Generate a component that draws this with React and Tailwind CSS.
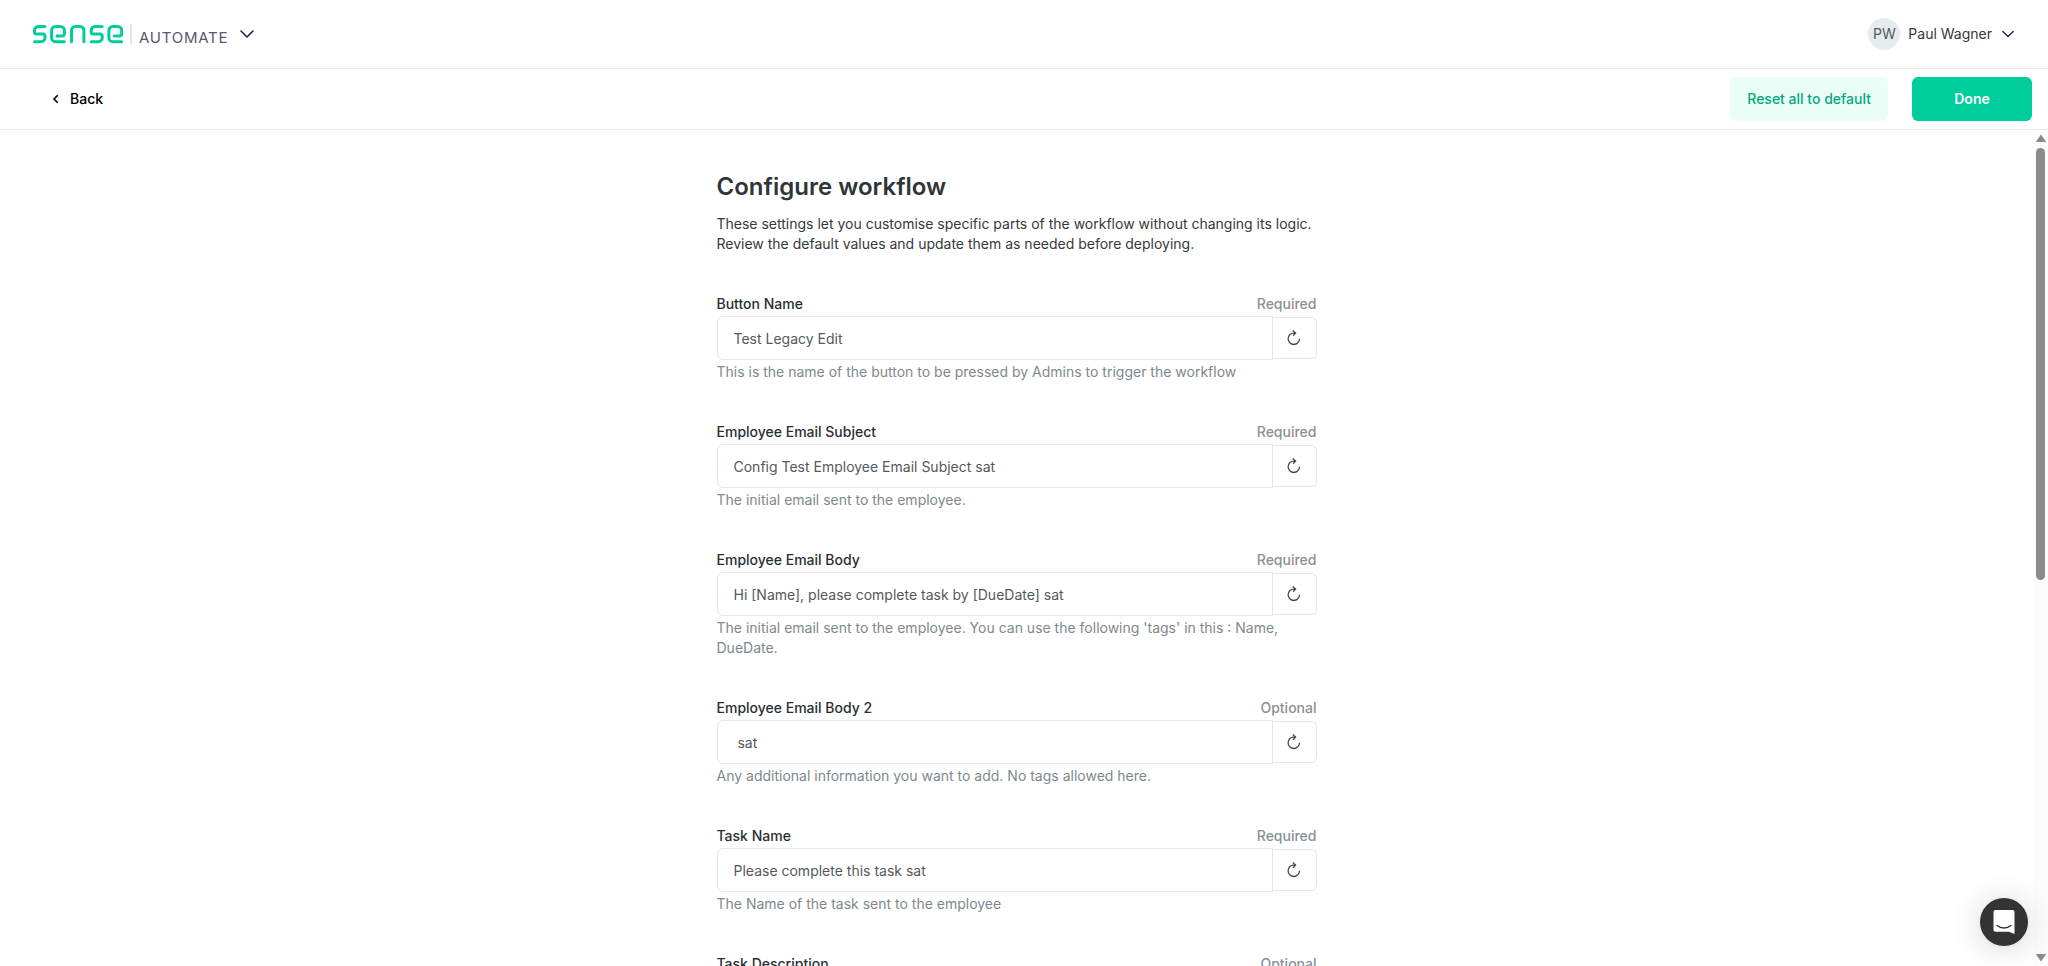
import React from "react";

const FIELDS = [
  { id: "button-name", label: "Button Name", need: "Required", value: "Test Legacy Edit", help: "This is the name of the button to be pressed by Admins to trigger the workflow" },
  { id: "email-subject", label: "Employee Email Subject", need: "Required", value: "Config Test Employee Email Subject sat", help: "The initial email sent to the employee." },
  { id: "email-body", label: "Employee Email Body", need: "Required", value: "Hi [Name], please complete task by [DueDate] sat", help: "The initial email sent to the employee. You can use the following 'tags' in this : Name, DueDate." },
  { id: "email-body-2", label: "Employee Email Body 2", need: "Optional", value: " sat", help: "Any additional information you want to add. No tags allowed here." },
  { id: "task-name", label: "Task Name", need: "Required", value: "Please complete this task sat", help: "The Name of the task sent to the employee" },
  { id: "task-description", label: "Task Description", need: "Optional", value: "", help: "" },
];

function SenseLogo() {
  return (
    <svg role="img" aria-label="sense" width="92" height="20" viewBox="0 0 92 20" fill="none" stroke="#00cd9c" strokeWidth="3" strokeLinecap="round" strokeLinejoin="round">
      <path d="M12.8 2.500H6.500a4 4 0 0 0-4 4v1.500a2 2 0 0 0 2 2h6.500a2 2 0 0 1 2 2v1.700a4 4 0 0 1-4 4H2.500" />
      <path d="M25 12h5a2.400 2.400 0 0 0 2.400-2.400V6.500a4 4 0 0 0-4-4h-4.800a4 4 0 0 0-4 4v7.200a4 4 0 0 0 4 4h8.700" />
      <path d="M39.500 17.700V6.500a4 4 0 0 1 4-4h4.400a4 4 0 0 1 4 4v11.200" />
      <path d="M70.100 2.500h-6.900a4 4 0 0 0-4 4v1.500a2 2 0 0 0 2 2h7a2 2 0 0 1 2 2v1.700a4 4 0 0 1-4 4h-7" />
      <path d="M82.300 12h5a2.400 2.400 0 0 0 2.400-2.400V6.500a4 4 0 0 0-4-4h-4.800a4 4 0 0 0-4 4v7.200a4 4 0 0 0 4 4h8.700" />
    </svg>
  );
}

function Chevron({ className }) {
  return (
    <svg className={className} viewBox="0 0 14 8" fill="none" stroke="currentColor" strokeWidth="1.600" strokeLinecap="round" strokeLinejoin="round" aria-hidden="true">
      <path d="M1 1l6 6 6-6" />
    </svg>
  );
}

function Field({ id, label, need, value, help }) {
  return (
    <div className="flex flex-col gap-0.5">
      <div className="flex justify-between">
        <label htmlFor={id} className="font-medium text-[#272f34]">{label}</label>
        <span className="font-medium text-[#889296]">{need}</span>
      </div>
      <div className="flex items-center">
        <input id={id} type="text" defaultValue={value} className="h-11 min-w-0 flex-1 rounded-l-md border border-[#e5e7e8] bg-white px-4 text-[#54595c] outline-none" />
        <button type="button" aria-label={`Reset ${label}`} className="flex h-[42px] w-11 items-center justify-center rounded-r-md border border-l-0 border-[#e5e7e8] text-[#464b4e]">
          <svg width="16" height="16" viewBox="0 0 16 16" fill="none" stroke="currentColor" strokeWidth="1.300" aria-hidden="true">
            <path d="M9.500 3.100H7.800a5.700 5.700 0 1 0 5.700 5.700M6.800.600l2.800 2.500-2.500 2.600" />
          </svg>
        </button>
      </div>
      <p className="text-[#7e898d]">{help}</p>
    </div>
  );
}

export default function App() {
  return (
    <div className="flex h-screen flex-col bg-white font-['Inter',sans-serif] text-sm leading-5">
      <header className="flex h-[69px] shrink-0 items-center justify-between border-b border-[#e4eef0] pr-[34px] pl-8">
        <button type="button" className="flex items-center text-[#5d5670]">
          <SenseLogo />
          <span className="ml-1.5 h-5 w-0.5 bg-[#e4e3ea]" />
          <span className="ml-[7px] pt-2 text-[15px] tracking-wider">AUTOMATE</span>
          <Chevron className="ml-3 h-2 w-3.5 text-[#2a2350]" />
        </button>
        <button type="button" className="flex items-center gap-2 text-[#34373a]">
          <span className="flex size-8 items-center justify-center rounded-full bg-[#e4ecee] text-[#54595c]">PW</span>
          <span>Paul Wagner</span>
          <Chevron className="ml-0.5 h-2 w-3 text-[#2a2350]" />
        </button>
      </header>

      <div className="flex h-[61px] shrink-0 items-center justify-between border-b border-[#e8ebec] pr-4 pl-[52px]">
        <button type="button" className="flex items-center gap-[11px] font-medium text-black">
          <svg width="7" height="10" viewBox="0 0 7 10" fill="none" stroke="currentColor" strokeWidth="1.600" aria-hidden="true">
            <path d="M5.700 1.200L2 5l3.700 3.800" />
          </svg>
          Back
        </button>
        <div className="flex gap-6">
          <button type="button" className="h-11 rounded-md bg-[#eafef7] px-[17px] font-medium text-[#06a77f]">Reset all to default</button>
          <button type="button" className="h-11 w-[120px] rounded-md bg-[#00cd9c] font-semibold text-white">Done</button>
        </div>
      </div>

      <div className="flex min-h-0 flex-1">
        <main className="flex-1 overflow-y-auto [scrollbar-width:none]">
          <form className="mx-auto flex max-w-[600px] flex-col gap-10 pt-[41px] pb-10">
            <div className="flex flex-col gap-[11px]">
              <h1 className="text-2xl leading-8 font-semibold text-[#2f3538]">Configure workflow</h1>
              <p className="text-[#34393c]">These settings let you customise specific parts of the workflow without changing its logic. Review the default values and update them as needed before deploying.</p>
            </div>
            {FIELDS.map((field) => (
              <Field key={field.id} {...field} />
            ))}
          </form>
        </main>
        <div aria-hidden="true" className="flex w-[15px] shrink-0 flex-col items-center bg-[#fcfcfc] text-[#8b8b8b]">
          <svg className="h-[18px] w-2.5 shrink-0" viewBox="0 0 10 18" fill="currentColor"><path d="M5 4.500l4.800 6.700a.5.5 0 0 1-.4.800H.600a.5.5 0 0 1-.4-.800z" /></svg>
          <div className="min-h-0 w-full flex-1"><div className="mx-auto h-[54%] w-[9px] rounded-full bg-[#8b8b8b]" /></div>
          <svg className="h-[18px] w-2.5 shrink-0" viewBox="0 0 10 18" fill="currentColor"><path d="M5 13.500L.200 6.800a.5.5 0 0 1 .4-.800h8.800a.5.5 0 0 1 .4.800z" /></svg>
        </div>
      </div>

      <button type="button" aria-label="Open chat" className="fixed right-5 bottom-5 flex size-12 items-center justify-center rounded-full bg-[#333333] shadow-[0_1px_6px_rgba(0,0,0,0.06),0_2px_32px_rgba(0,0,0,0.16)]">
        <svg width="24" height="26" viewBox="0 0 24 26" aria-hidden="true">
          <path d="M3.500 1h17a2 2 0 0 1 2 2v22l-5.500-2.200H3.500a2 2 0 0 1-2-2V3a2 2 0 0 1 2-2z" fill="white" />
          <path d="M5 16.500c4 3.200 10 3.200 14 0" fill="none" stroke="#333333" strokeWidth="1.500" strokeLinecap="round" />
        </svg>
      </button>
    </div>
  );
}
